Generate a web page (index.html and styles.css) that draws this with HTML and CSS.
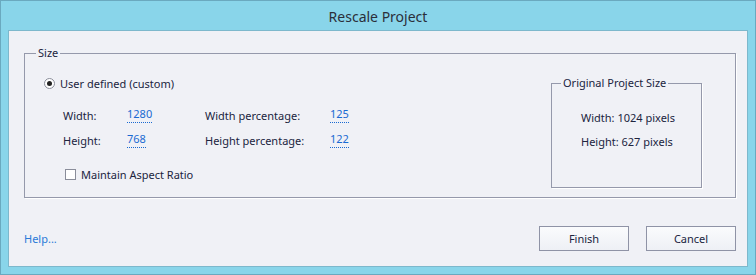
FILE: index.html
```html
<!DOCTYPE html>
<html lang="en">
<head>
  <meta charset="UTF-8" />
  <title>Rescale Project</title>
  <link rel="stylesheet" href="styles.css">
</head>
<body>
  <div class="window">
    <div class="titlebar">Rescale Project</div>

    <div class="panel">
      <fieldset class="group size-group">
        <legend>Size</legend>

        <div class="size-body">
          <div class="size-left">
            <label class="radio-row">
              <span class="radio"><span class="dot"></span></span>
              User defined (custom)
            </label>

            <div class="fields">
              <span class="lbl">Width:</span>
              <span class="val">1280</span>
              <span class="lbl">Width percentage:</span>
              <span class="val">125</span>

              <span class="lbl">Height:</span>
              <span class="val">768</span>
              <span class="lbl">Height percentage:</span>
              <span class="val">122</span>
            </div>

            <label class="check-row">
              <span class="check"></span>
              Maintain Aspect Ratio
            </label>
          </div>

          <fieldset class="group orig-group">
            <legend>Original Project Size</legend>
            <div class="orig-body">
              <div class="orig-line">Width: 1024 pixels</div>
              <div class="orig-line">Height: 627 pixels</div>
            </div>
          </fieldset>
        </div>
      </fieldset>

      <div class="footer">
        <a class="help" href="#">Help...</a>
        <div class="buttons">
          <button class="btn">Finish</button>
          <button class="btn">Cancel</button>
        </div>
      </div>
    </div>
  </div>
</body>
</html>
```

FILE: styles.css
```css
html, body {
  margin: 0; padding: 0;
  width: 756px; height: 275px; overflow: hidden;
  font-family: "Noto Sans", "Open Sans", sans-serif;
  font-size: 11px; color: #20243e;
}

.window {
  box-sizing: border-box;
  width: 756px; height: 275px;
  background: #89d5ea;
  border: 1px solid #6aa9bf;
  padding: 0 7px 7px 7px;
  display: flex; flex-direction: column;
}

.titlebar {
  height: 29px; line-height: 31px;
  text-align: center;
  font-size: 14px; color: #2b2f3a;
}

.panel {
  flex: 1;
  background: #f0f1f6;
  border: 1px solid #7db8cc;
  padding: 16px 11px 0 15px;
  display: flex; flex-direction: column;
}

.group {
  margin: 0; padding: 0;
  border: 1px solid #9599ab;
  box-shadow: 1px 1px 0 #fff;
}
.group legend {
  padding: 0 2px; margin-left: 11px;
  line-height: 12px; white-space: nowrap;
}

.size-group {
  height: 151px; box-sizing: border-box;
}
.size-body {
  display: flex; justify-content: space-between;
  padding: 0 34px 0 19px;
}

.radio-row {
  display: flex; align-items: center; gap: 5px;
  margin-top: 17px;
}
.radio {
  width: 11px; height: 11px; box-sizing: border-box;
  border: 1px solid #8a8d9a; border-radius: 50%; background: #fff;
  display: flex; align-items: center; justify-content: center;
}
.dot {
  width: 5px; height: 5px; border-radius: 50%; background: #222;
}

.fields {
  display: grid;
  grid-template-columns: 64px 78px 125px auto;
  row-gap: 8px;
  margin: 16px 0 0 19px;
  line-height: 17px;
}
.val {
  color: #1a6ad2;
  justify-self: start;
  border-bottom: 1px dotted #1a6ad2;
  line-height: 14px; height: 15px;
}

.check-row {
  display: flex; align-items: center; gap: 5px;
  margin: 18px 0 0 21px;
}
.check {
  width: 11px; height: 11px; box-sizing: border-box;
  border: 1px solid #8a8d9a; background: #fff;
}

.orig-group {
  width: 151px; height: 111px; box-sizing: border-box;
  margin-top: 18px; margin-right: -1px;
}
.orig-group legend { margin-left: 9px; }
.orig-body { padding: 20px 0 0 29px; }
.orig-line { line-height: 18px; margin-bottom: 6px; }

.footer {
  flex: 1;
  display: flex; align-items: flex-end; justify-content: space-between;
  padding-bottom: 15px;
}
.help {
  color: #2a7ad8; text-decoration: none;
  line-height: 24px;
}
.buttons { display: flex; gap: 17px; }
.btn {
  width: 90px; height: 25px;
  font-family: inherit; font-size: 11px; color: #20243e;
  background: linear-gradient(#fafbfd, #eef0f5);
  border: 1px solid #8f93a6;
  padding: 0;
}
```
